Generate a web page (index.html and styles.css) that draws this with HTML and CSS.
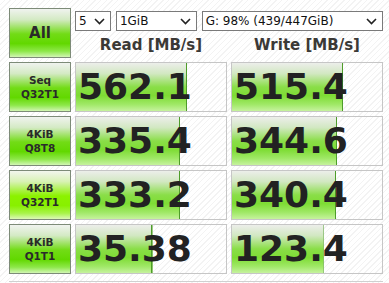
FILE: index.html
```html
<!DOCTYPE html>
<html lang="en">
<head>
  <meta charset="UTF-8">
  <title>CrystalDiskMark</title>
  <link rel="stylesheet" href="styles.css">
</head>
<body>
  <div class="board">
    <div class="btn all">All</div>
    <div class="head">
      <div class="opts">
        <div class="pick pick-count"><span>5</span><svg width="11" height="7" viewBox="0 0 11 7"><polyline points="1,1 5.5,5.5 10,1"/></svg></div>
        <div class="pick pick-size"><span>1GiB</span><svg width="11" height="7" viewBox="0 0 11 7"><polyline points="1,1 5.5,5.5 10,1"/></svg></div>
        <div class="pick pick-drive"><span>G: 98% (439/447GiB)</span><svg width="11" height="7" viewBox="0 0 11 7"><polyline points="1,1 5.5,5.5 10,1"/></svg></div>
      </div>
      <div class="cols">
        <div>Read [MB/s]</div>
        <div>Write [MB/s]</div>
      </div>
    </div>

    <div class="btn">Seq<br>Q32T1</div>
    <div class="meter" style="--w: 74%">562.1</div>
    <div class="meter" style="--w: 74%">515.4</div>

    <div class="btn">4KiB<br>Q8T8</div>
    <div class="meter" style="--w: 69.5%">335.4</div>
    <div class="meter" style="--w: 70%">344.6</div>

    <div class="btn hot">4KiB<br>Q32T1</div>
    <div class="meter" style="--w: 69.5%">333.2</div>
    <div class="meter" style="--w: 69.5%">340.4</div>

    <div class="btn">4KiB<br>Q1T1</div>
    <div class="meter" style="--w: 51%">35.38</div>
    <div class="meter" style="--w: 61%">123.4</div>

    <div class="comment"></div>
  </div>
</body>
</html>
```

FILE: styles.css
```css
body {
  margin: 0;
  padding: 8px 0 0 9px;
  font-family: "DejaVu Sans", sans-serif;
  color: #222;
  background: repeating-linear-gradient(135deg, #fff 0 3px, #f3f3f3 3px 4px);
  height: 283px;
  box-sizing: border-box;
  overflow: hidden;
}
.board {
  display: grid;
  grid-template-columns: 62px 152px 152px;
  grid-template-rows: repeat(5, 50px) 2px;
  gap: 4px;
}
.btn {
  display: flex;
  align-items: center;
  justify-content: center;
  text-align: center;
  box-sizing: border-box;
  border: 1px solid #7d8b78;
  font-size: 10.5px;
  font-weight: bold;
  line-height: 14px;
  color: #2a2a2a;
  background: linear-gradient(#f0f3ef 0%, #d4eac4 22%, #72dc16 52%, #62d800 72%, #8ee84a 88%, #d2f6b4 100%);
}
.btn.hot {
  background: linear-gradient(#f2f6ee 0%, #d8f2b4 22%, #8cf200 52%, #88f000 72%, #a8f44a 88%, #dcf8b8 100%);
}
.all {
  font-size: 15px;
}
.head {
  grid-column: 2 / 4;
  display: flex;
  flex-direction: column;
}
.opts {
  display: flex;
  gap: 5px;
  margin-top: 3px;
}
.pick {
  display: flex;
  align-items: center;
  justify-content: space-between;
  box-sizing: border-box;
  height: 20px;
  padding: 0 5px 0 3px;
  border: 1px solid #7a7a7a;
  background: #fff;
  font-size: 12px;
  color: #111;
}
.pick svg polyline {
  fill: none;
  stroke: #222;
  stroke-width: 1.6;
}
.pick-count { width: 36px; }
.pick-size { width: 81px; }
.pick-drive { width: 182px; }
.cols {
  display: grid;
  grid-template-columns: 152px 152px;
  gap: 4px;
  margin-top: 5px;
}
.cols div {
  text-align: center;
  font-size: 15px;
  font-weight: bold;
  color: #3b3936;
}
.meter {
  box-sizing: border-box;
  border: 1px solid #c6c6c6;
  padding-left: 2px;
  font-size: 36px;
  font-weight: bold;
  line-height: 48px;
  color: #222;
  background:
    linear-gradient(to left, #4e9c2a 1px, transparent 1px) 0 0 / var(--w) 100% no-repeat,
    linear-gradient(#eceeea 0%, #d2e8c2 22%, #8ade48 50%, #7edc34 68%, #9fe866 86%, #c6f29e 100%) 0 0 / var(--w) 100% no-repeat,
    repeating-linear-gradient(135deg, #fff 0 3px, #f3f3f3 3px 4px);
}
.comment {
  grid-column: 1 / 4;
  margin-top: 3px;
  border: 1px solid #d0d0d0;
  border-bottom: none;
  background: #fff;
}
```
